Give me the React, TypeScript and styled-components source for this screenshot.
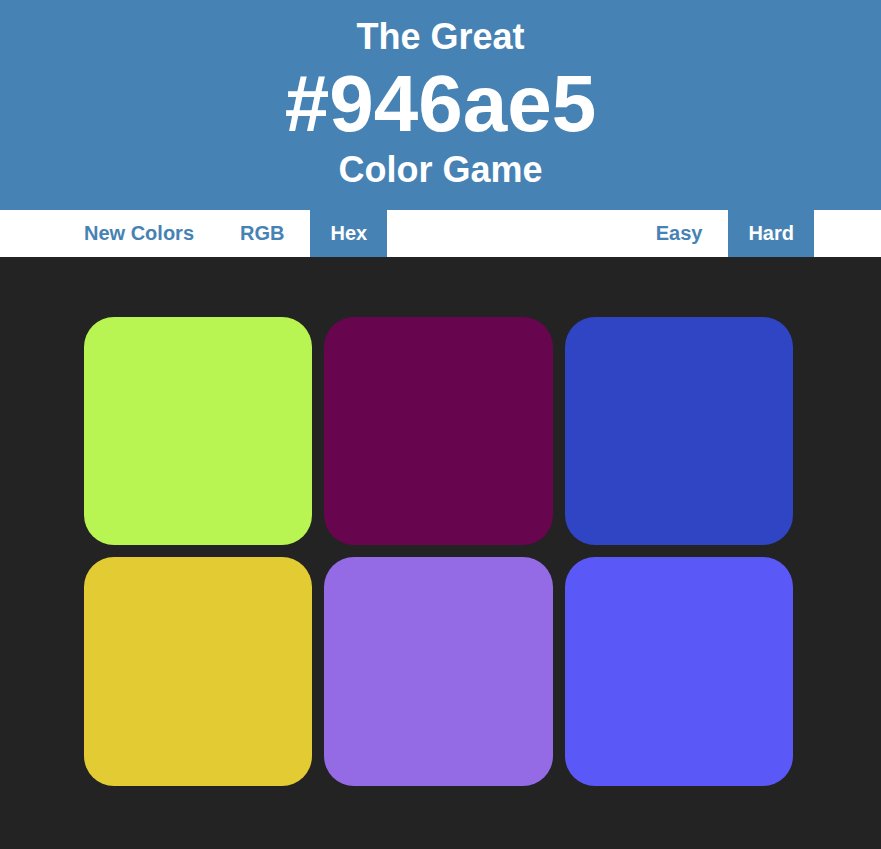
import React from "react";
import styled, { createGlobalStyle } from "styled-components";

const GlobalStyle = createGlobalStyle`
  html, body {
    margin: 0;
    padding: 0;
    background: #232323;
    font-family: "Liberation Sans", Arial, sans-serif;
  }
`;

const Header = styled.header`
  background: #4682b4;
  color: #ffffff;
  text-align: center;
  padding: 17px 0 20px;
`;

const TitleLine = styled.div<{ $size: number; $lh: number }>`
  font-size: ${(p) => p.$size}px;
  line-height: ${(p) => p.$lh}px;
  font-weight: 700;
`;

const Nav = styled.nav`
  background: #ffffff;
  height: 47px;
  display: flex;
  justify-content: space-between;
  padding: 0 67px 0 64px;
`;

const Group = styled.div`
  display: flex;
  gap: 6px;
`;

const NavButton = styled.button<{ $active?: boolean }>`
  border: none;
  margin: 0;
  padding: 0 20px;
  height: 47px;
  line-height: 47px;
  font-family: "Liberation Sans", Arial, sans-serif;
  font-size: 20px;
  font-weight: 700;
  background: ${(p) => (p.$active ? "#4682b4" : "#ffffff")};
  color: ${(p) => (p.$active ? "#ffffff" : "#4682b4")};
  cursor: pointer;
`;

const Board = styled.main`
  display: grid;
  grid-template-columns: repeat(3, 228.3px);
  grid-auto-rows: 228.3px;
  gap: 12.2px;
  padding: 60px 0 0 84px;
`;

const Square = styled.div<{ $color: string }>`
  background: ${(p) => p.$color};
  border-radius: 30px;
`;

const colors = ["#b9f552", "#67054e", "#2f45c4", "#e3cc33", "#946ae5", "#5b58f8"];

export default function App() {
  return (
    <>
      <GlobalStyle />
      <Header>
        <TitleLine $size={36} $lh={40}>The Great</TitleLine>
        <TitleLine $size={80} $lh={93}>#946ae5</TitleLine>
        <TitleLine $size={36} $lh={40}>Color Game</TitleLine>
      </Header>
      <Nav>
        <Group>
          <NavButton>New Colors</NavButton>
          <NavButton>RGB</NavButton>
          <NavButton $active>Hex</NavButton>
        </Group>
        <Group>
          <NavButton>Easy</NavButton>
          <NavButton $active>Hard</NavButton>
        </Group>
      </Nav>
      <Board>
        {colors.map((c) => (
          <Square key={c} $color={c} />
        ))}
      </Board>
    </>
  );
}
